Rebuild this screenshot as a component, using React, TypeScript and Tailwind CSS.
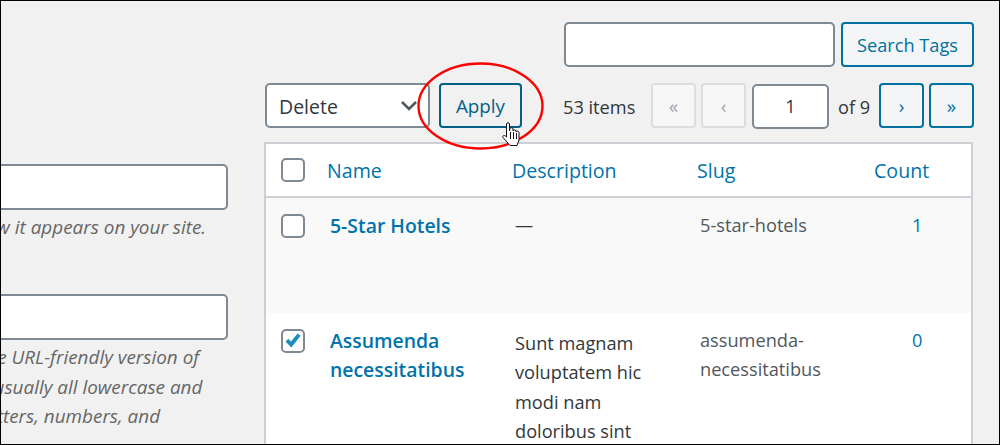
const font = "font-['Open_Sans',sans-serif]";

function PageButton({ label, disabled }: { label: string; disabled?: boolean }) {
  return (
    <button
      className={
        disabled
          ? "flex h-[45px] w-[45px] items-center justify-center rounded-[4px] border-2 border-[#dddddd] bg-[#f7f7f7] pt-[3px] text-[19px] text-[#a0a5aa]"
          : "flex h-[45px] w-[45px] items-center justify-center rounded-[4px] border-2 border-[#0071a1] bg-[#f3f5f6] pt-[3px] text-[19px] text-[#0071a1]"
      }
    >
      {label}
    </button>
  );
}

function Checkbox({ checked }: { checked?: boolean }) {
  return (
    <div className="flex h-[24px] w-[24px] items-center justify-center rounded-[5px] border-2 border-[#7e8993] bg-white">
      {checked && (
        <svg width="20" height="20" viewBox="0 0 20 20">
          <path d="M2.5 10.5 L5.3 7.8 L8 10.6 L14.6 2.5 L17.6 4.8 L8.3 16.6 Z" fill="#1e8cbe" />
        </svg>
      )}
    </div>
  );
}

export default function App() {
  return (
    <div className={`relative h-[445px] w-[1000px] overflow-hidden ${font}`}>
      <div className="flex h-full w-full overflow-hidden border border-black bg-[#f1f1f1] text-[18.2px] leading-[29.3px] text-[#32373c]">
        <div className="w-[263px] shrink-0 overflow-hidden pt-[163px]">
          <div className="ml-[-172px] w-[399px]">
            <div className="h-[46px] rounded-[5px] border-2 border-[#7e8993] bg-white" />
            <p className="ml-[41px] mt-[3px] whitespace-nowrap text-[18.9px] italic text-[#666666]">The name is how it appears on your site.</p>
            <div className="mt-[52px] h-[46px] rounded-[5px] border-2 border-[#7e8993] bg-white" />
            <p className="mt-[3px] whitespace-nowrap text-[18.9px] italic text-[#666666]">
              <span className="ml-[47px] block">The “slug” is the URL-friendly version of</span>
              <span className="ml-[42px] block">the name. It is usually all lowercase and</span>
              <span className="ml-[38px] block">contains only letters, numbers, and</span>
            </p>
          </div>
        </div>

        <div className="w-[709px] shrink-0 pt-[21px]">
          <div className="mr-[-1px] flex justify-end gap-[6px]">
            <input readOnly className="h-[45px] w-[271px] rounded-[5px] border-2 border-[#7e8993] bg-white" />
            <button className="h-[45px] w-[133px] rounded-[4px] border-2 border-[#0071a1] bg-[#f3f5f6] pt-[2px] text-[#0071a1]">Search Tags</button>
          </div>

          <div className="mr-[-1px] mt-[16px] flex h-[46px] items-start">
            <div className="ml-px flex h-[45px] w-[165px] items-center justify-between rounded-[5px] border-2 border-[#7e8993] bg-white pl-[12px] pr-[10px]">
              <span className="pt-[3px] text-[19.5px]">Delete</span>
              <svg width="18" height="12" viewBox="0 0 18 12">
                <path d="M2 2 L9 9 L16 2" fill="none" stroke="#50575e" strokeWidth="2.6" />
              </svg>
            </div>
            <button className="ml-[9px] h-[45px] w-[83px] rounded-[4px] border-2 border-[#016087] bg-[#f1f1f1] pt-[3px] text-[18.8px] text-[#016087]">Apply</button>
            <span className="ml-[41px] w-[88px] whitespace-nowrap leading-[49px]">53 items</span>
            <PageButton label="«" disabled />
            <div className="ml-[5px]"><PageButton label="‹" disabled /></div>
            <div className="ml-[6px] mt-px flex h-[45px] w-[77px] items-center justify-center rounded-[5px] border-2 border-[#7e8993] bg-white pt-[1px]">1</div>
            <span className="ml-[9px] w-[41px] whitespace-nowrap leading-[49px]">of 9</span>
            <PageButton label="›" />
            <div className="ml-[5px]"><PageButton label="»" /></div>
          </div>

          <div className="mt-[13px] w-[709px] border-x-2 border-t-2 border-[#ccd0d4] bg-white">
            <div className="grid h-[54px] grid-cols-[61px_185px_185px_177px_1fr] items-center border-b-2 border-[#ccd0d4] text-[19.6px] text-[#0073aa]">
              <div className="pl-[15px]"><Checkbox /></div>
              <span className="pt-[2px]">Name</span>
              <span className="pt-[2px]">Description</span>
              <span className="pt-[2px]">Slug</span>
              <span className="pt-[2px]">Count</span>
            </div>
            <div className="grid h-[115px] grid-cols-[61px_185px_185px_177px_1fr] bg-[#f9f9f9] pt-[13px]">
              <div className="pl-[15px] pt-[3px]"><Checkbox /></div>
              <a className="pl-[3px] text-[19.4px] font-semibold text-[#0073aa]">5-Star Hotels</a>
              <span className="pl-[3px]">—</span>
              <span className="pl-[3px] text-[#50575e]">5-star-hotels</span>
              <span className="pl-[38px] text-[#0073aa]">1</span>
            </div>
            <div className="grid h-[200px] grid-cols-[61px_185px_185px_177px_1fr] pt-[13px]">
              <div className="pl-[15px] pt-[3px]"><Checkbox checked /></div>
              <a className="pl-[3px] text-[19.4px] font-semibold text-[#0073aa]">
                Assumenda
                <br />
                necessitatibus
              </a>
              <span className="pl-[3px] pt-[3px]">
                Sunt magnam
                <br />
                voluptatem hic
                <br />
                modi nam
                <br />
                doloribus sint
              </span>
              <span className="pl-[3px] text-[#50575e]">
                assumenda-
                <br />
                necessitatibus
              </span>
              <span className="pl-[38px] text-[#0073aa]">0</span>
            </div>
          </div>
        </div>
      </div>

      <svg className="pointer-events-none absolute left-0 top-0" width="1000" height="445" viewBox="0 0 1000 445">
        <ellipse cx="480.5" cy="106" rx="62" ry="42.5" fill="none" stroke="#ff0000" strokeWidth="2.4" />
        <path
          d="M506.5 124 C506.5 122.4 509.5 122.4 509.5 124 L509.5 131 L510 128.6 C510.5 127.4 512.6 127.4 513 128.8 L513 131 C513.5 129.4 515.6 129.4 516 131 L516 132 C516.6 130.6 518.6 130.8 519 132.4 L519 140 L517 145.5 L510 145.5 L503 137.5 C502 135.5 504.5 134.5 506.5 137 Z"
          fill="#ffffff"
          stroke="#111111"
          strokeWidth="1"
        />
        <path d="M510.5 132 V139 M513.5 132 V139 M516.5 133 V139" stroke="#111111" strokeWidth="1" fill="none" />
      </svg>
    </div>
  );
}
